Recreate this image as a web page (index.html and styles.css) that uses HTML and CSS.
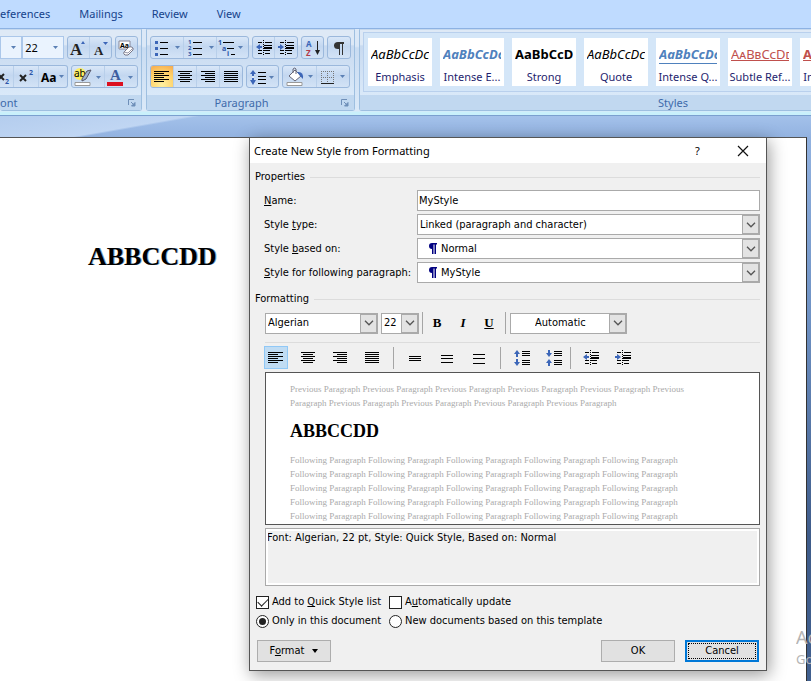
FILE: index.html
```html
<!DOCTYPE html>
<html lang="en">
<head>
<meta charset="utf-8">
<title>Create New Style from Formatting</title>
<link rel="stylesheet" href="styles.css">
</head>
<body>
<svg class="defs" aria-hidden="true">
  <symbol id="left" viewBox="0 0 16 14"><path d="M0 1.5h15M0 3.5h10M0 5.5h15M0 7.5h10M0 9.5h15M0 11.5h10" stroke="#000"/></symbol>
  <symbol id="center" viewBox="0 0 16 14"><path d="M1 1.5h14M3 3.5h10M1 5.5h14M3 7.5h10M1 9.5h14M3 11.5h10" stroke="#000"/></symbol>
  <symbol id="right" viewBox="0 0 16 14"><path d="M1 1.5h14M5 3.5h10M1 5.5h14M5 7.5h10M1 9.5h14M5 11.5h10" stroke="#000"/></symbol>
  <symbol id="full" viewBox="0 0 16 14"><path d="M1 1.5h14M1 3.5h14M1 5.5h14M1 7.5h14M1 9.5h14M1 11.5h14" stroke="#000"/></symbol>
  <symbol id="tri" viewBox="0 0 5 3"><path d="M0 0h5L2.500 3z" fill="#5b80b5"/></symbol>
  <symbol id="chev" viewBox="0 0 10 6"><path d="M1 .8l4 4 4-4" fill="none" stroke="#555" stroke-width="1.3"/></symbol>
  <symbol id="outdent" viewBox="0 0 16 16"><path d="M2 2.500h4M9 2.500h7M2 13.500h4M9 13.500h5M2 10.500h4" stroke="#000"/><path d="M8 5.500h8M8 10.500h6" stroke="#000"/><path d="M8 8h8" stroke="#000" stroke-width="2"/><path d="M7.500 0v16" stroke="#000" stroke-dasharray="1 1"/><path d="M0 7l4-3v2h2v2H4v2z" fill="#3c66b8"/></symbol>
  <symbol id="indent" viewBox="0 0 16 16"><path d="M2 2.500h4M9 2.500h7M2 13.500h4M9 13.500h5M2 10.500h4" stroke="#000"/><path d="M8 5.500h8M8 10.500h6" stroke="#000"/><path d="M8 8h8" stroke="#000" stroke-width="2"/><path d="M7.500 0v16" stroke="#000" stroke-dasharray="1 1"/><path d="M6 7L2 4v2H0v2h2v2z" fill="#3c66b8"/></symbol>
  <symbol id="launch" viewBox="0 0 8 8"><path d="M.5 6V.5H6" fill="none" stroke="#6f8fb8"/><path d="M3 3l3 3M7 3.500v3.500H3.500z" fill="#6f8fb8" stroke="#6f8fb8"/></symbol>
</svg>

<nav class="tabs">
  <a href="#references">eferences</a><a href="#mailings">Mailings</a><a href="#review">Review</a><a href="#view">View</a>
</nav>

<header class="ribbon">
  <section class="group font-group">
    <div class="tools">
      <div class="row">
        <span class="mini-combo stub"><svg width="5" height="3"><use href="#tri"/></svg></span>
        <span class="mini-combo"><select aria-label="Ribbon font size"><option>22</option></select><svg width="5" height="3"><use href="#tri"/></svg></span>
        <div class="set size-set">
          <button aria-label="Grow font"><svg width="18" height="20"><text x="1" y="17" class="serif" font-size="17">A</text><path d="M12 6l2-3 2 3z" fill="#3c66b8"/></svg></button>
          <button aria-label="Shrink font"><svg width="18" height="20"><text x="3" y="17" class="serif" font-size="13">A</text><path d="M12 4h5l-2.500 3z" fill="#3c66b8"/></svg></button>
        </div>
        <div class="set"><button aria-label="Clear formatting"><svg width="18" height="18"><path d="M2 2h11v8H2z" fill="#fff" stroke="#889"/><text x="3" y="9" class="sans" font-size="7" font-weight="700">Aa</text><path d="M7 13l5-5q2-1 4 1v2l-5 5H8q-2-1-1-3z" fill="#fff" stroke="#778"/><path d="M7 13l4 1 5-5" fill="none" stroke="#99a"/></svg></button></div>
      </div>
      <div class="row">
        <div class="set script-set">
          <button class="sub" aria-label="Subscript"><svg width="12" height="20"><path d="M-2 7l6 6M4 7l-6 6" stroke="#222" stroke-width="2"/><text x="5" y="17" class="blue sans" font-size="7">2</text></svg></button>
          <button class="sup" aria-label="Superscript"><svg width="18" height="20"><path d="M3 8l6 6M9 8l-6 6" stroke="#222" stroke-width="2"/><text x="12" y="8" class="blue sans" font-size="7">2</text></svg></button>
          <button class="case" aria-label="Change case"><svg width="28" height="18"><text x="2" y="14" class="sans" font-size="12" font-weight="700">Aa</text><use href="#tri" x="20" y="7" width="5" height="3"/></svg></button>
        </div>
        <div class="set">
          <button class="drop" aria-label="Highlight"><svg width="30" height="20"><circle cx="7" cy="7" r="6" fill="#ffef62"/><text x="1" y="10" class="sans" font-size="10">ab</text><path d="M9 12l5-8 4-1-5 9-4 2z" fill="#9db0cf" stroke="#556"/><path d="M2 15.500h15v3H2z" fill="#fff" stroke="#999"/><use href="#tri" x="23" y="9" width="5" height="3"/></svg></button>
          <button class="drop" aria-label="Font colour"><svg width="30" height="20"><text x="4" y="13" class="serif ink" font-size="15">A</text><path d="M1 15h16v4H1z" fill="#dc1020"/><use href="#tri" x="22" y="9" width="5" height="3"/></svg></button>
        </div>
      </div>
    </div>
    <footer><span>ont</span><button class="launcher" aria-label="Font dialog"><svg width="8" height="8"><use href="#launch"/></svg></button></footer>
  </section>

  <section class="group para-group">
    <div class="tools">
      <div class="row">
        <div class="set">
          <button class="drop" aria-label="Bullets"><svg width="30" height="18"><path d="M3 2h3v3H3zM3 8h3v3H3zM3 14h3v3H3z" fill="#3c66b8"/><path d="M8 3.500h8M8 9.500h8M8 15.500h8" stroke="#000"/><use href="#tri" x="23" y="7" width="5" height="3"/></svg></button>
          <button class="drop" aria-label="Numbering"><svg width="30" height="20"><g class="blue sans" font-size="6"><text x="3" y="6">1</text><text x="3" y="12">2</text><text x="3" y="18">3</text></g><path d="M8 4.500h9M8 10.500h9M8 16.500h9" stroke="#000"/><use href="#tri" x="24" y="8" width="5" height="3"/></svg></button>
          <button class="drop" aria-label="Multilevel list"><svg width="30" height="20"><g class="blue sans" font-size="7"><text x="1" y="7">1</text><text x="5" y="13">a</text><text x="10" y="18">i</text></g><path d="M6 4.500h11M10 10.500h7M14 16.500h4" stroke="#000"/><use href="#tri" x="21" y="8" width="5" height="3"/></svg></button>
        </div>
        <div class="set">
          <button aria-label="Decrease indent"><svg width="16" height="16"><use href="#outdent"/></svg></button>
          <button aria-label="Increase indent"><svg width="16" height="16"><use href="#indent"/></svg></button>
        </div>
        <div class="set"><button aria-label="Sort"><svg width="18" height="20"><g class="sans" font-size="8" font-weight="700"><text x="2" y="9" fill="#3c66b8">A</text><text x="2" y="18" fill="#b33a4a">Z</text></g><path d="M13.500 3v12" stroke="#222"/><path d="M11 12h5l-2.500 5z" fill="#222"/></svg></button></div>
        <div class="set"><button aria-label="Show marks"><svg width="14" height="16"><path d="M12 2H6a4 3.500 0 0 0 0 7h1v6h1V4h2v11h1V4h1z" fill="#333"/></svg></button></div>
      </div>
      <div class="row">
        <div class="set">
          <button class="on" aria-label="Align left"><svg width="16" height="14"><use href="#left"/></svg></button>
          <button aria-label="Centre"><svg width="16" height="14"><use href="#center"/></svg></button>
          <button aria-label="Align right"><svg width="16" height="14"><use href="#right"/></svg></button>
          <button aria-label="Justify"><svg width="16" height="14"><use href="#full"/></svg></button>
        </div>
        <div class="set"><button class="drop" aria-label="Line spacing"><svg width="28" height="18"><path d="M1 6l3-4 3 4H5v6h2l-3 5-3-5h2V6z" fill="#3c66b8"/><path d="M3 8h2v2H3z" fill="#dce9f8"/><path d="M9 4.500h8M9 8.500h8M9 11.500h8M9 15.500h8" stroke="#000"/><use href="#tri" x="20" y="8" width="5" height="3"/></svg></button></div>
        <div class="set">
          <button class="drop" aria-label="Shading"><svg width="30" height="20"><path d="M4 9l6-6 6 6-6 5z" fill="#fff" stroke="#667"/><path d="M8 6V2q2-2 3 0v5" fill="none" stroke="#667"/><path d="M12 5q7-1 6 7l-3-3z" fill="#3c66b8"/><path d="M2 15.500h15v3H2z" fill="#fff" stroke="#999"/><use href="#tri" x="23" y="8" width="5" height="3"/></svg></button>
          <button class="drop" aria-label="Borders"><svg width="30" height="18"><path d="M3 3.500h13M3 9.500h13M3.500 3v13M9.500 3v13M15.500 3v13" stroke="#777" stroke-dasharray="1 1"/><path d="M3 15.500h13" stroke="#222"/><use href="#tri" x="22" y="7" width="5" height="3"/></svg></button>
        </div>
      </div>
    </div>
    <footer><span>Paragraph</span><button class="launcher" aria-label="Paragraph dialog"><svg width="8" height="8"><use href="#launch"/></svg></button></footer>
  </section>

  <section class="group styles-group">
    <div class="gallery">
      <button class="tile"><span class="sample"><i>AaBbCcDc</i></span><span>Emphasis</span></button>
      <button class="tile"><span class="sample intense"><i>AaBbCcDc</i></span><span>Intense E...</span></button>
      <button class="tile"><span class="sample"><b>AaBbCcDc</b></span><span>Strong</span></button>
      <button class="tile"><span class="sample"><i>AaBbCcDc</i></span><span>Quote</span></button>
      <button class="tile"><span class="sample intense lined"><i>AaBbCcDc</i></span><span>Intense Q...</span></button>
      <button class="tile"><span class="sample subtle">AaBbCcDd</span><span>Subtle Ref...</span></button>
      <button class="tile"><span class="sample subtle"><b>AaBb</b></span><span>Intense R...</span></button>
    </div>
    <footer><span>Styles</span></footer>
  </section>
</header>

<main class="workspace">
  <article class="page"><p class="doc-text">ABBCCDD</p></article>
</main>

<aside class="watermark"><span>Activate</span><small>Go to Settings</small></aside>

<form class="dialog" role="dialog" aria-label="Create New Style from Formatting">
  <div class="title"><h1>Create New Style from Formatting</h1>
    <button type="button" aria-label="Help">?</button>
    <button type="button" aria-label="Close"><svg width="12" height="12"><path d="M1 1l10 10M11 1L1 11" stroke="#111" stroke-width="1.200"/></svg></button>
  </div>
  <div class="content">
    <h2>Properties</h2>
    <div class="fields">
      <label for="name"><u>N</u>ame:</label><input id="name" value="MyStyle">
      <label for="type">Style <u>t</u>ype:</label>
      <span class="combo"><select id="type"><option>Linked (paragraph and character)</option></select><span class="arrow"><svg width="10" height="6"><use href="#chev"/></svg></span></span>
      <label for="based">Style <u>b</u>ased on:</label>
      <span class="combo marked"><select id="based"><option>Normal</option></select><svg class="mark" width="9" height="11"><path d="M9 0H4a3 3 0 0 0 0 6v5h1.500V1.500h1V11H8V1.500h1z" fill="#000080"/></svg><span class="arrow"><svg width="10" height="6"><use href="#chev"/></svg></span></span>
      <label for="next"><u>S</u>tyle for following paragraph:</label>
      <span class="combo marked"><select id="next"><option>MyStyle</option></select><svg class="mark" width="9" height="11"><path d="M9 0H4a3 3 0 0 0 0 6v5h1.500V1.500h1V11H8V1.500h1z" fill="#000080"/></svg><span class="arrow"><svg width="10" height="6"><use href="#chev"/></svg></span></span>
    </div>
    <h2>Formatting</h2>
    <div class="bar font-bar">
      <span class="combo w-font"><select aria-label="Font"><option>Algerian</option></select><span class="arrow"><svg width="10" height="6"><use href="#chev"/></svg></span></span>
      <span class="combo w-size"><select aria-label="Size"><option>22</option></select><span class="arrow"><svg width="10" height="6"><use href="#chev"/></svg></span></span>
      <i class="sep"></i>
      <div class="letters">
        <button type="button" class="letter"><b>B</b></button>
        <button type="button" class="letter"><i>I</i></button>
        <button type="button" class="letter"><u>U</u></button>
      </div>
      <i class="sep"></i>
      <span class="combo w-color"><select aria-label="Font colour"><option>Automatic</option></select><span class="arrow"><svg width="10" height="6"><use href="#chev"/></svg></span></span>
    </div>
    <div class="bar align-bar">
      <button type="button" class="on" aria-label="Left"><svg width="16" height="14"><use href="#left"/></svg></button>
      <button type="button" aria-label="Centre"><svg width="16" height="14"><use href="#center"/></svg></button>
      <button type="button" aria-label="Right"><svg width="16" height="14"><use href="#right"/></svg></button>
      <button type="button" aria-label="Justify"><svg width="16" height="14"><use href="#full"/></svg></button>
      <i class="sep"></i>
      <button type="button" aria-label="Single spacing"><svg width="12" height="12"><path d="M0 4.500h12M0 6.500h12M0 8.500h12" stroke="#000"/></svg></button>
      <button type="button" aria-label="1.5 spacing"><svg width="12" height="12"><path d="M0 3.500h12M0 6.500h12M0 10.500h12" stroke="#000"/></svg></button>
      <button type="button" aria-label="Double spacing"><svg width="12" height="12"><path d="M0 2.500h12M0 6.500h12M0 11.500h12" stroke="#000"/></svg></button>
      <i class="sep"></i>
      <button type="button" aria-label="More space"><svg width="16" height="18"><path d="M0 5l3-4 3 4H4v3H2V5zM2 10h2v3h2l-3 4-3-4h2z" fill="#3c66b8"/><path d="M8 2.500h8M8 4.500h8M8 6.500h8M8 11.500h8M8 13.500h8M8 15.500h8" stroke="#000"/></svg></button>
      <button type="button" aria-label="Less space"><svg width="16" height="18"><path d="M2 1h2v3h2L3 8 0 4h2zM0 14l3-4 3 4H4v3H2v-3z" fill="#3c66b8"/><path d="M8 2.500h8M8 4.500h8M8 6.500h8M8 11.500h8M8 13.500h8M8 15.500h8" stroke="#000"/></svg></button>
      <i class="sep tight"></i>
      <button type="button" aria-label="Outdent"><svg width="16" height="16"><use href="#outdent"/></svg></button>
      <button type="button" aria-label="Indent"><svg width="16" height="16"><use href="#indent"/></svg></button>
    </div>
    <div class="preview">
      <p>Previous Paragraph Previous Paragraph Previous Paragraph Previous Paragraph Previous Paragraph Previous<br>Paragraph Previous Paragraph Previous Paragraph Previous Paragraph Previous Paragraph</p>
      <p class="styled">ABBCCDD</p>
      <p>Following Paragraph Following Paragraph Following Paragraph Following Paragraph Following Paragraph<br>Following Paragraph Following Paragraph Following Paragraph Following Paragraph Following Paragraph<br>Following Paragraph Following Paragraph Following Paragraph Following Paragraph Following Paragraph<br>Following Paragraph Following Paragraph Following Paragraph Following Paragraph Following Paragraph<br>Following Paragraph Following Paragraph Following Paragraph Following Paragraph Following Paragraph</p>
    </div>
    <div class="summary">Font: Algerian, 22 pt, Style: Quick Style, Based on: Normal</div>
    <div class="options">
      <label><input type="checkbox" checked><span>Add to <u>Q</u>uick Style list</span></label>
      <label><input type="checkbox"><span>A<u>u</u>tomatically update</span></label>
      <label><input type="radio" name="scope" checked><span>Only in this document</span></label>
      <label><input type="radio" name="scope"><span>New documents based on this template</span></label>
    </div>
    <div class="actions">
      <button type="button" class="format"><span>F<u>o</u>rmat</span><svg width="6" height="4"><path d="M0 0h6L3 4z"/></svg></button>
      <button type="submit">OK</button>
      <button type="button" class="cancel"><span>Cancel</span></button>
    </div>
  </div>
</form>
</body>
</html>
```
FILE: styles.css
```css
* { box-sizing: border-box; }
body {
  margin: 0;
  min-height: 100vh;
  display: flex;
  flex-direction: column;
  position: relative;
  overflow: hidden;
  background: #bfdbff;
  font: 11px/16px "Noto Sans", "Open Sans", sans-serif;
}
button, input, select { font: inherit; color: inherit; margin: 0; }
button { display: flex; align-items: center; justify-content: center; padding: 0; border: 0; background: none; }
svg { display: block; flex: none; }
p, h1, h2 { margin: 0; font: inherit; }
.defs { position: absolute; width: 0; height: 0; }
.serif { font-family: "Liberation Serif", serif; font-weight: 700; fill: #222; }
.serif.ink { fill: #3d5e9f; }
.sans { font-family: "Noto Sans", sans-serif; }
.blue { fill: #2d56a8; font-weight: 700; }

/* Ribbon */
.tabs { display: flex; gap: 29px; height: 28px; align-items: center; flex: none; }
.tabs a { color: #15428b; text-decoration: none; }
.ribbon {
  display: flex;
  gap: 4px;
  height: 88px;
  flex: none;
  padding-bottom: 4px;
  border-top: 1px solid #8db2e3;
  border-bottom: 1px solid #7ba0cf;
  background: linear-gradient(#dbe8f7 0 20%, #c9dcf2 22%, #dbe9f8 95%, #c9f0fb 97%);
}
.group {
  display: flex;
  flex-direction: column;
  flex: none;
  border: 1px solid #9ebfe0;
  border-top-color: #c5d8ee;
  border-radius: 0 0 3px 3px;
  background: linear-gradient(#dee9f6 0 18%, #c8daf0 20%, #dcebfa 90%);
}
.font-group { width: 142px; border-left: 0; }
.para-group { width: 209px; }
.styles-group { width: 628px; }
.tools { display: flex; flex-direction: column; gap: 6px; padding: 6px 3px 0; flex: 1; }
.font-group .tools { padding-left: 0; }
.row { display: flex; gap: 3px; height: 23px; }
.set { display: flex; border: 1px solid #9bb8dc; border-radius: 3px; overflow: hidden; background: linear-gradient(#d9e7f8, #c3d7f0 45%, #d3e3f6); }
.set button { width: 22px; }
.set button + button { border-left: 1px solid #b8cfea; width: 23px; }
.set button.drop { width: 33px; }
.para-group .set button:only-child.drop { width: 31px; }
.set button.sub { width: 13px; justify-content: flex-start; }
.set button.sup { width: 25px; }
.set button.case { width: 29px; }
.script-set { border-left: 0; border-radius: 0 3px 3px 0; }
.set button.on { background: radial-gradient(circle at 50% 90%, #fff0a0, #ffd067 60%, #f5a94f); }
.mini-combo { display: grid; align-items: center; width: 43px; background: #eaf3fe; border: 1px solid #abc7ea; margin-left: -3px; }
.mini-combo.stub { width: 23px; margin-left: 0; }
.mini-combo > * { grid-area: 1 / 1; }
.mini-combo svg { justify-self: end; margin-right: 5px; pointer-events: none; }
.mini-combo select { appearance: none; border: 0; background: none; padding: 0 2px; width: 100%; height: 100%; }
.group footer { display: flex; align-items: center; height: 15px; padding-top: 1px; background: #c1d8f0; color: #3e6aaa; flex: none; }
.group footer span { flex: 1; text-align: center; }
.font-group footer span { text-align: left; }
.launcher { width: 18px; }
.gallery {
  display: flex;
  gap: 8px;
  flex: 1;
  margin: 2px 0 3px 3px;
  padding: 5px 4px;
  border: 1px solid #b9d0ed;
  background: #d4e6f8;
  overflow: hidden;
}
.tile { width: 64px; flex: none; flex-direction: column; align-items: stretch; justify-content: space-between; padding: 7px 3px 1px; background: #fff; color: #1e1e6e; white-space: nowrap; }
.tile > span { overflow: hidden; text-align: center; margin: 0 -3px; }
.tile > .sample { text-align: left; margin: 0; font-size: 13px; line-height: 18px; color: #000; }
.tile > .intense { color: #4f81bd; font-weight: 700; }
.tile > .lined { border-bottom: 1px solid #4f81bd; }
.tile > .subtle { color: #c0504d; font-variant: small-caps; text-decoration: underline; }

/* Document area */
.workspace {
  flex: 1;
  display: flex;
  padding: 21px 4px 0 0;
  background:
    linear-gradient(170deg, #b4cdee, #c0d6f3 33px, transparent 35px) 0 0 / 240px 21px no-repeat,
    linear-gradient(#a3c1ea, #92b2e0 22px, #6f92c4 200px, #3f5c8a 420px, #41608f);
}
.page { flex: 1; background: #fff; border-top: 1px solid #555; border-right: 1px solid #333; padding: 102px 88px; }
.doc-text, .styled { font-family: "Liberation Serif", serif; font-weight: 700; color: #000; }
.doc-text { font-size: 26px; line-height: 34px; text-shadow: 1px 0 0 #7fa3c4; }
.watermark { position: absolute; right: 0; bottom: 12px; width: 15px; overflow: hidden; white-space: nowrap; color: #b4b4b4; display: flex; flex-direction: column; }
.watermark span { font-size: 18px; line-height: 24px; }
.watermark small { font-size: 13px; line-height: 20px; }

/* Dialog */
.dialog {
  position: absolute;
  left: 249px;
  top: 137px;
  width: 518px;
  border: 1px solid #555;
  background: #f0f0f0;
  box-shadow: 2px 4px 16px rgba(0, 0, 0, .4);
  font: 11px/16px "DejaVu Sans Condensed", "DejaVu Sans", sans-serif;
  color: #000;
}
.title { display: flex; height: 25px; align-items: center; background: #fff; padding-left: 4px; font: 11px/16px "Noto Sans", sans-serif; }
.title h1 { flex: 1; }
.title button { width: 45px; }
.title button:last-child { width: 46px; }
.content { padding: 6px 6px 8px 5px; }
h2 { display: flex; align-items: center; gap: 5px; height: 16px; }
h2::after { content: ""; flex: 1; height: 1px; background: #dcdcdc; }
.fields { display: grid; grid-template-columns: 153px 1fr; gap: 3px 0; padding: 5px 0 8px 9px; align-items: center; }
.fields input { height: 21px; width: 100%; border: 1px solid #aaa; padding: 0 1px; background: #fff; border-radius: 0; }
.combo { display: grid; height: 21px; border: 1px solid #aaa; background: #fff; align-items: center; }
.combo > * { grid-area: 1 / 1; }
.combo select { appearance: none; width: 100%; height: 100%; border: 0; background: none; padding: 0 2px; border-radius: 0; }
.marked select { padding-left: 23px; }
.mark { margin-left: 10px; pointer-events: none; }
.arrow { justify-self: end; display: flex; align-items: center; justify-content: center; width: 17px; height: 100%; border: 1px solid #aaa; background: #e3e3e3; pointer-events: none; }
.bar { display: flex; align-items: center; margin-left: 10px; }
.bar .sep { width: 1px; height: 22px; background: #a5a5a5; }
.font-bar { padding: 5px 0 8px; border-bottom: 1px solid #dcdcdc; }
.w-font { width: 113px; margin-right: 3px; }
.w-size { width: 38px; margin-right: 3px; }
.w-color { width: 117px; margin-left: 4px; }
.w-color select { padding-left: 24px; }
.letters { display: flex; padding: 0 3px 0 1px; }
.letter { width: 26px; height: 21px; font: 700 13px/16px "Liberation Serif", serif; }
.align-bar { height: 29px; gap: 10px; }
.align-bar button { width: 22px; height: 21px; }
.align-bar button.on { background: #c0dcf3; outline: 1px solid #90c8f6; }
.align-bar .tight { margin: 0 -1px 0 -5px; }
.preview { height: 153px; margin-left: 10px; border: 1px solid #555; background: #fff; padding: 9px 24px; overflow: hidden; white-space: nowrap; color: #aaa; font: 9px/14px "Liberation Serif", serif; }
.preview .styled { font-size: 18px; line-height: 28px; padding: 7px 0 8px; }
.summary { height: 58px; margin: 3px 0 0 10px; border: 1px solid #aaa; outline: 2px solid #fff; outline-offset: -3px; padding: 1px; }
.options { display: grid; grid-template-columns: 133px 1fr; row-gap: 3px; padding: 8px 0 0 1px; }
.options label { display: flex; align-items: center; gap: 3px; height: 16px; white-space: nowrap; }
.options input { appearance: none; width: 13px; height: 13px; margin: 0; border: 1px solid #222; background: #fff; display: grid; place-items: center; }
.options input[type="radio"] { border-radius: 50%; }
.options input[type="radio"]:checked::before { content: ""; width: 7px; height: 7px; border-radius: 50%; background: #222; }
.options input[type="checkbox"]:checked::before { content: ""; width: 9px; height: 5px; border: solid #222; border-width: 0 0 1px 1px; rotate: -45deg; translate: 0 -1px; }
.actions { display: flex; gap: 10px; padding: 11px 1px 0 2px; }
.actions button { width: 74px; height: 22px; border: 1px solid #adadad; background: #e1e1e1; }
.actions .format { margin-right: auto; gap: 8px; }
.actions .cancel { border: 2px solid #0078d7; padding: 1px; }
.cancel span { flex: 1; height: 16px; line-height: 14px; border: 1px dotted #000; }
```
